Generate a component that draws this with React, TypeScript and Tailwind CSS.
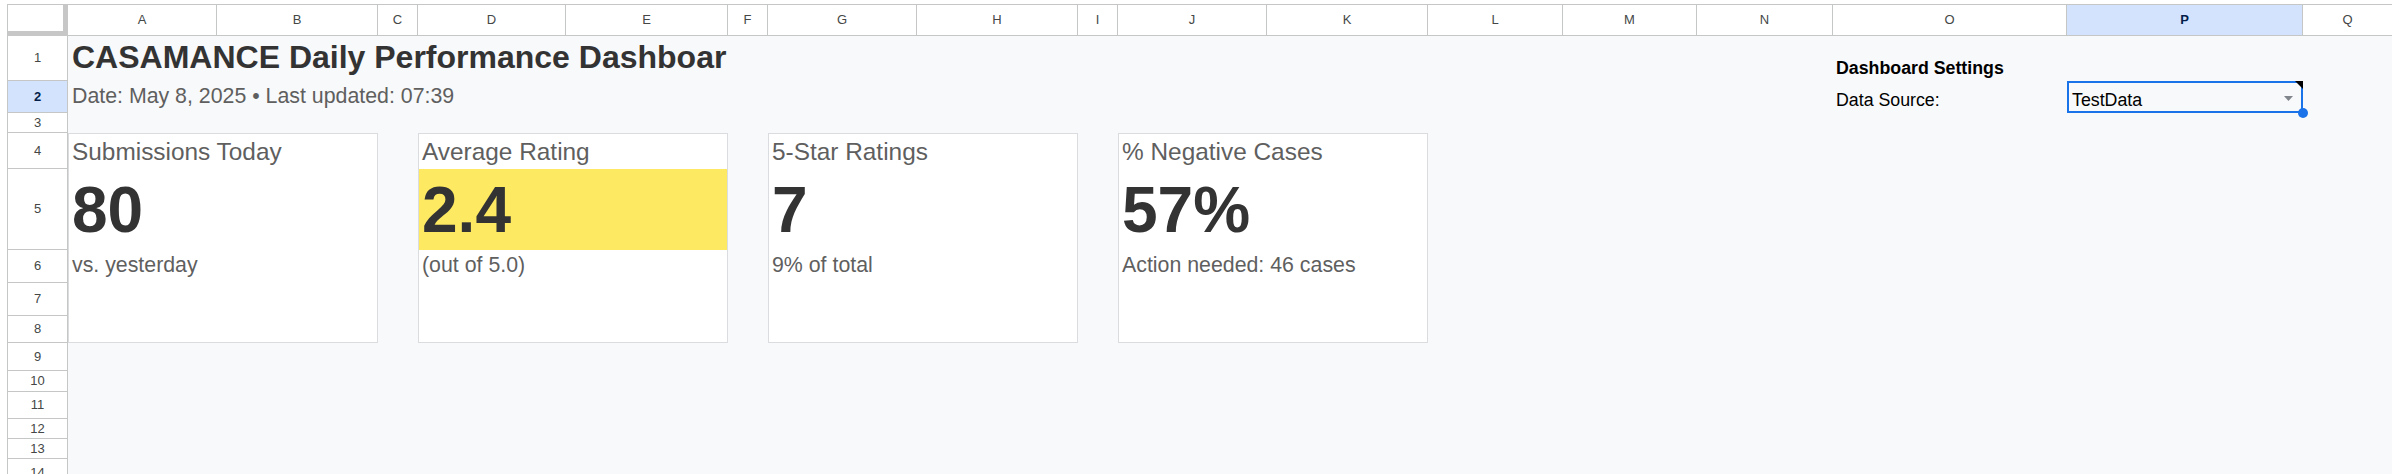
import React from "react";

const FONT = { fontFamily: '"Liberation Sans", Arial, sans-serif' };

const headerCols: { l: string; w: string; sel?: boolean }[] = [
  { l: "A", w: "w-[149px]" },
  { l: "B", w: "w-[161px]" },
  { l: "C", w: "w-[40px]" },
  { l: "D", w: "w-[148px]" },
  { l: "E", w: "w-[162px]" },
  { l: "F", w: "w-[40px]" },
  { l: "G", w: "w-[149px]" },
  { l: "H", w: "w-[161px]" },
  { l: "I", w: "w-[40px]" },
  { l: "J", w: "w-[149px]" },
  { l: "K", w: "w-[161px]" },
  { l: "L", w: "w-[135px]" },
  { l: "M", w: "w-[134px]" },
  { l: "N", w: "w-[136px]" },
  { l: "O", w: "w-[234px]" },
  { l: "P", w: "w-[236px]", sel: true },
];

const rowHeads: { n: number; h: string; sel?: boolean }[] = [
  { n: 1, h: "h-[45px]" },
  { n: 2, h: "h-[32px]", sel: true },
  { n: 3, h: "h-[20px]" },
  { n: 4, h: "h-[36px]" },
  { n: 5, h: "h-[81px]" },
  { n: 6, h: "h-[33px]" },
  { n: 7, h: "h-[33px]" },
  { n: 8, h: "h-[27px]" },
  { n: 9, h: "h-[28px]" },
  { n: 10, h: "h-[21px]" },
  { n: 11, h: "h-[27px]" },
  { n: 12, h: "h-[20px]" },
  { n: 13, h: "h-[20px]" },
  { n: 14, h: "h-[28px]" },
];

function Card({
  pos,
  label,
  value,
  sub,
  highlight,
}: {
  pos: string;
  label: string;
  value: string;
  sub: string;
  highlight?: boolean;
}) {
  return (
    <div className={`${pos} row-start-4 row-span-5 flex flex-col border border-[#dadce0] bg-white`}>
      <div className="flex h-[35px] items-end pb-[3px] pl-[3px] text-[24.4px] leading-[1.15] text-[#5f5f5f] whitespace-nowrap">
        {label}
      </div>
      <div
        className={`flex h-[81px] items-end pb-[2px] pl-[3px] text-[64px] font-bold leading-[1.15] text-[#333333] ${
          highlight ? "bg-[#fde962]" : ""
        }`}
      >
        {value}
      </div>
      <div className="flex h-[33px] items-end pb-[5px] pl-[3px] text-[21.33px] leading-[1.15] text-[#5f5f5f] whitespace-nowrap">
        {sub}
      </div>
    </div>
  );
}

export default function App() {
  return (
    <div className="h-[474px] w-[2392px] overflow-hidden bg-white pl-[7px] pt-[4px]" style={FONT}>
      <div className="flex h-[470px] flex-col border-l border-t border-[#c4c7c5]">
        {/* Column header */}
        <div className="flex h-[31px] shrink-0">
          <div className="h-full w-[60px] shrink-0 border-b-[5px] border-r-[5px] border-[#c7c7c7] bg-white" />
          {headerCols.map((c) => (
            <div
              key={c.l}
              className={`${c.w} flex h-full shrink-0 items-center justify-center border-b border-r border-[#c4c7c5] text-[13px] ${
                c.sel ? "bg-[#d3e3fd] font-bold text-[#041e49]" : "bg-white text-[#444746]"
              }`}
            >
              {c.l}
            </div>
          ))}
          <div className="flex h-full flex-1 items-center justify-center border-b border-[#c4c7c5] bg-white text-[13px] text-[#444746]">
            Q
          </div>
        </div>

        {/* Body */}
        <div className="flex flex-1">
          <div className="flex w-[60px] shrink-0 flex-col">
            {rowHeads.map((r) => (
              <div
                key={r.n}
                className={`${r.h} flex shrink-0 items-center justify-center border-b border-r border-[#c4c7c5] text-[13px] ${
                  r.sel ? "bg-[#d3e3fd] font-bold text-[#041e49]" : "bg-white text-[#444746]"
                }`}
              >
                {r.n}
              </div>
            ))}
          </div>

          <div className="grid flex-1 grid-cols-[149px_161px_40px_148px_162px_40px_149px_161px_40px_149px_161px_135px_134px_136px_234px_236px_1fr] grid-rows-[45px_32px_20px_36px_81px_33px_33px_27px_28px_21px_27px_20px_20px_28px] bg-[#f8f9fa]">
            {/* Title */}
            <div className="col-start-1 col-span-5 row-start-1 flex items-end pb-[5px] pl-[4px] text-[32px] font-bold leading-[1.15] text-[#333333] whitespace-nowrap">
              CASAMANCE Daily Performance Dashboar
            </div>
            {/* Date */}
            <div className="col-start-1 col-span-6 row-start-2 flex items-end pb-[4px] pl-[4px] text-[21.33px] leading-[1.15] text-[#5f5f5f] whitespace-nowrap">
              Date: May 8, 2025 • Last updated: 07:39
            </div>

            {/* Settings */}
            <div className="col-start-15 row-start-1 flex items-end pb-[3px] pl-[3px] text-[17.78px] font-bold leading-[1.15] text-black whitespace-nowrap">
              Dashboard Settings
            </div>
            <div className="col-start-15 row-start-2 flex items-end pb-[3px] pl-[3px] text-[17.78px] leading-[1.15] text-black whitespace-nowrap">
              Data Source:
            </div>
            <div className="relative col-start-16 row-start-2 flex items-end justify-between pb-[3px] pl-[5px] pr-[10px] text-[17.78px] leading-[1.15] text-black">
              <span>TestData</span>
              <svg width="9" height="5" viewBox="0 0 9 5" className="mb-[9px]">
                <polygon points="0,0 9,0 4.5,5" fill="#80868b" />
              </svg>
              <div className="absolute inset-0 border-2 border-[#1a73e8]" />
              <svg width="8" height="8" viewBox="0 0 8 8" className="absolute right-0 top-0">
                <polygon points="0,0 8,0 8,8" fill="#000" />
              </svg>
              <div className="absolute -bottom-[5px] -right-[5px] h-[10px] w-[10px] rounded-full bg-[#1a73e8]" />
            </div>

            {/* Cards */}
            <Card pos="col-start-1 col-span-2" label="Submissions Today" value="80" sub="vs. yesterday" />
            <Card pos="col-start-4 col-span-2" label="Average Rating" value="2.4" sub="(out of 5.0)" highlight />
            <Card pos="col-start-7 col-span-2" label="5-Star Ratings" value="7" sub="9% of total" />
            <Card pos="col-start-10 col-span-2" label="% Negative Cases" value="57%" sub="Action needed: 46 cases" />
          </div>
        </div>
      </div>
    </div>
  );
}
